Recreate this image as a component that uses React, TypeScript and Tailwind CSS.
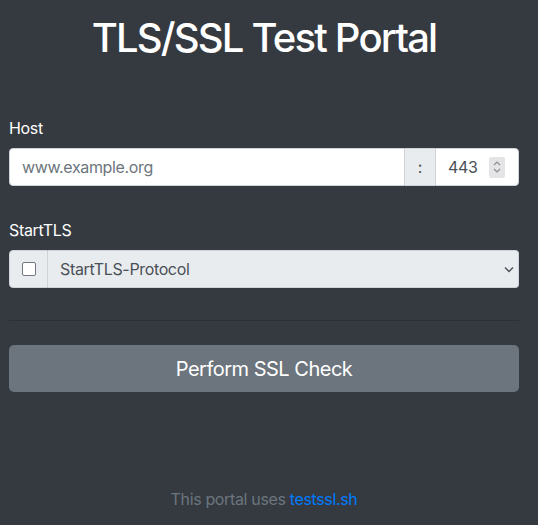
export default function App() {
  return (
    <div
      className="min-h-[525px] bg-[#343a40] pl-[9px] pr-[19px] tracking-[-0.35px] text-white"
      style={{ fontFamily: "Inter, 'Liberation Sans', sans-serif" }}
    >
      <h1 className="pt-[14px] text-center text-[40px] font-medium leading-[48px] tracking-[-1.8px]">
        TLS/SSL Test Portal
      </h1>

      <form className="mt-[54px]" onSubmit={(e) => e.preventDefault()}>
        {/* Host */}
        <label className="block text-[16px] leading-[24px]">Host</label>
        <div className="mt-[8px] flex h-[38px] text-[16px]">
          <input
            type="text"
            placeholder="www.example.org"
            className="min-w-0 flex-1 rounded-l-[4px] border border-[#ced4da] bg-white px-[12px] text-[#495057] outline-none placeholder:text-[#6c757d]"
          />
          <span className="flex w-[30px] items-center justify-center border-y border-[#ced4da] bg-[#e9ecef] text-[#495057]">
            :
          </span>
          <div className="flex w-[84px] items-center justify-between rounded-r-[4px] border border-[#ced4da] bg-white pl-[12px] pr-[13px] text-[#495057]">
            <span>443</span>
            <span className="flex h-[21px] w-[16px] flex-col items-center justify-center rounded-[2px] bg-[#e4e4e7]">
              <svg width="8" height="14" viewBox="0 0 8 14" fill="none" stroke="#8a8a8f" strokeWidth="1.1">
                <path d="M1 5 L4 2 L7 5" />
                <path d="M1 9 L4 12 L7 9" />
              </svg>
            </span>
          </div>
        </div>

        {/* StartTLS */}
        <label className="mt-[32px] block text-[16px] leading-[24px]">StartTLS</label>
        <div className="mt-[8px] flex h-[38px] text-[16px]">
          <span className="flex w-[39px] items-center justify-center rounded-l-[4px] border border-[#ced4da] bg-[#e9ecef]">
            <span className="h-[14px] w-[14px] rounded-[2px] border-[1.5px] border-[#767680] bg-white" />
          </span>
          <div className="flex flex-1 items-center justify-between rounded-r-[4px] border border-l-0 border-[#ced4da] bg-[#e9ecef] pl-[12px] pr-[4px] text-[#495057]">
            <span>StartTLS-Protocol</span>
            <svg width="10" height="7" viewBox="0 0 10 7" fill="none" stroke="#495057" strokeWidth="1.4">
              <path d="M1 1.5 L5 5.5 L9 1.5" />
            </svg>
          </div>
        </div>

        <hr className="mt-[32px] border-t border-[rgba(0,0,0,0.15)]" />

        <button
          type="submit"
          className="mt-[24px] h-[47px] w-full rounded-[5px] bg-[#6c757d] text-[20px] tracking-[-0.5px] text-white"
        >
          Perform SSL Check
        </button>
      </form>

      <p className="mt-[95px] text-center text-[16px] text-[#6c757d]">
        This portal uses <a href="#" className="text-[#007bff]">testssl.sh</a>
      </p>
    </div>
  );
}
